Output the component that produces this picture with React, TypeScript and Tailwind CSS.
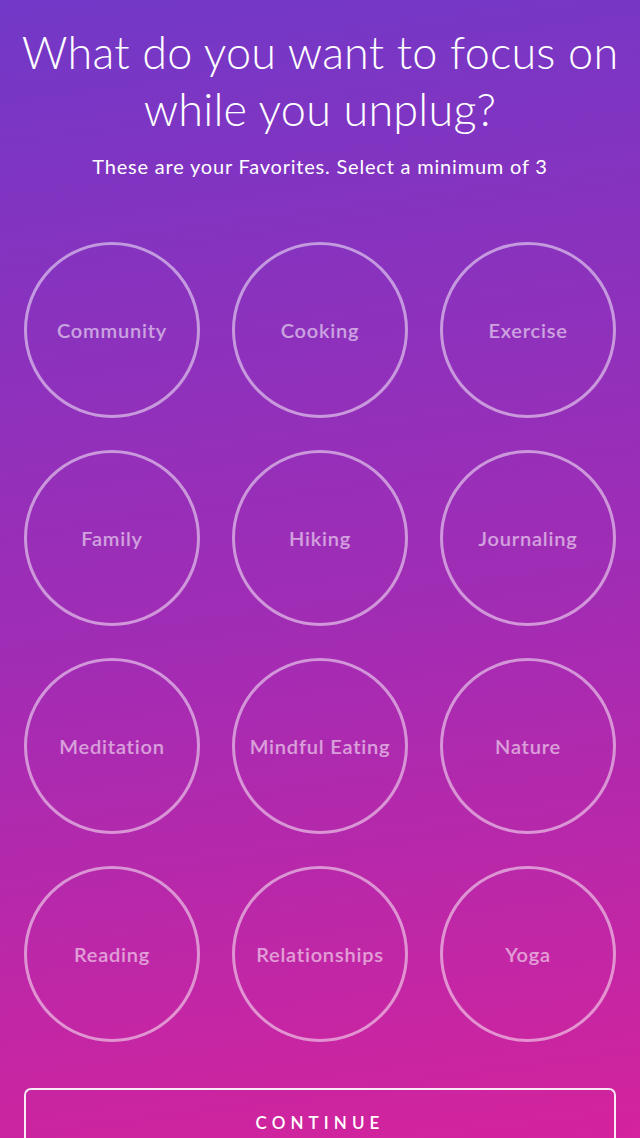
import React from "react";

const items = [
  "Community",
  "Cooking",
  "Exercise",
  "Family",
  "Hiking",
  "Journaling",
  "Meditation",
  "Mindful Eating",
  "Nature",
  "Reading",
  "Relationships",
  "Yoga",
];

export default function App() {
  return (
    <div
      className="w-[640px] h-[1138px] overflow-hidden bg-[linear-gradient(172deg,#7238c7_0%,#a22cb4_55%,#d4239c_100%)] text-white flex flex-col items-center"
      style={{ fontFamily: "Lato, 'Open Sans', sans-serif" }}
    >
      <h1 className="mt-[24px] text-[45px] leading-[57px] font-light text-center tracking-[0.2px]">
        What do you want to focus on
        <br />
        while you unplug?
      </h1>
      <p className="mt-[16px] text-[20px] leading-[24px] font-normal text-center tracking-[0.04em]">
        These are your Favorites. Select a minimum of 3
      </p>
      <div className="mt-[64px] grid grid-cols-3 gap-x-[32px] gap-y-[32px]">
        {items.map((t) => (
          <div
            key={t}
            className="w-[176px] h-[176px] rounded-full border-[3px] border-white/50 flex items-center justify-center"
          >
            <span className="text-[20px] font-semibold tracking-[0.04em] text-white/55">
              {t}
            </span>
          </div>
        ))}
      </div>
      <button className="mt-[46px] w-[592px] h-[70px] shrink-0 rounded-[7px] border-2 border-white/90 flex items-start justify-center pt-[20px]">
        <span className="text-[17px] font-semibold tracking-[0.3em] text-white">
          CONTINUE
        </span>
      </button>
    </div>
  );
}
